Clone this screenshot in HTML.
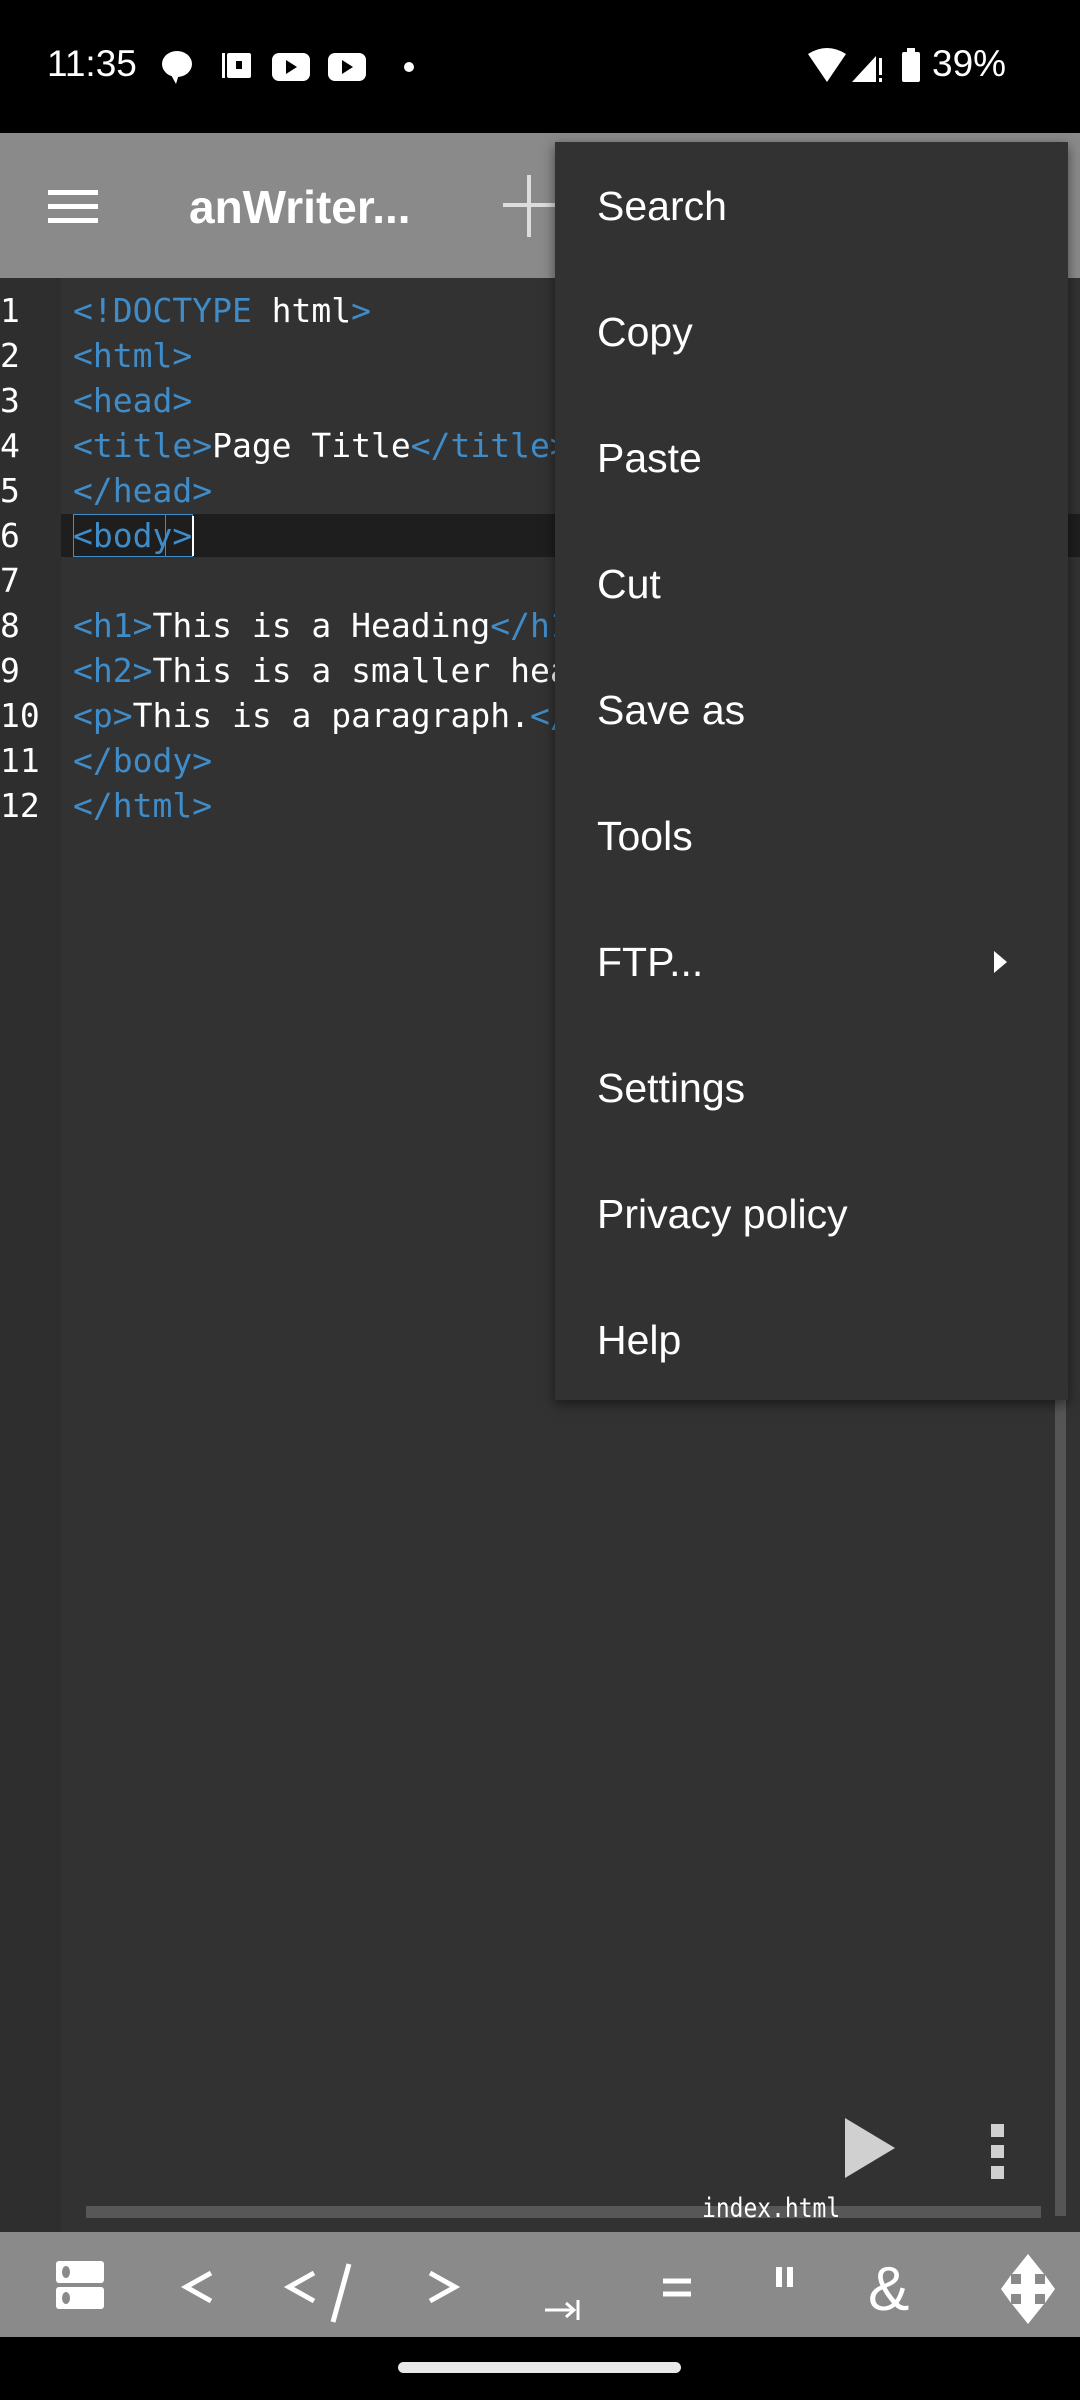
<!DOCTYPE html>
<html><head><style>
*{margin:0;padding:0;box-sizing:border-box}
body{width:1080px;height:2400px;background:#323232;position:relative;overflow:hidden;font-family:"Liberation Sans",sans-serif;color:#fff}
.abs{position:absolute}
.code{font-family:"DejaVu Sans Mono",monospace;font-size:33px;line-height:45px;white-space:pre}
.t{color:#3f8cc8}
.menu div{position:absolute;left:42px;font-size:41px;color:#fff;line-height:48px}
</style></head><body>
<div class="abs" style="left:0;top:0;width:1080px;height:133px;background:#000"></div>
<div class="abs" style="left:47px;top:43px;font-size:37px;">11:35</div>
<svg class="abs" style="left:160px;top:48px" width="270" height="40" viewBox="0 0 270 40">
<ellipse cx="17" cy="16" rx="15" ry="13" fill="#fff"/><path d="M10 25 L16 36 L19 26Z" fill="#fff"/>
<rect x="62" y="5" width="3" height="25" fill="#fff"/><rect x="67" y="5" width="24" height="25" rx="2" fill="#fff"/><rect x="76" y="13" width="6" height="8" fill="#000"/>
<rect x="112" y="5" width="38" height="28" rx="7" fill="#fff"/><path d="M126 12 L137 19 L126 26Z" fill="#000"/>
<rect x="168" y="5" width="38" height="28" rx="7" fill="#fff"/><path d="M182 12 L193 19 L182 26Z" fill="#000"/>
<circle cx="249" cy="19" r="5" fill="#fff"/>
</svg>
<svg class="abs" style="left:806px;top:46px" width="200" height="40" viewBox="0 0 200 40">
<path d="M2 8 Q21 -4 40 8 L21 36Z" fill="#fff"/>
<path d="M46 36 L70 10 L70 36Z" fill="#fff"/><rect x="73" y="12" width="3" height="17" fill="#fff"/><rect x="73" y="32" width="3" height="4" fill="#fff"/>
<rect x="96" y="6" width="18" height="30" rx="2" fill="#fff"/><rect x="101" y="2" width="8" height="5" fill="#fff"/>
</svg>
<div class="abs" style="left:932px;top:43px;font-size:37px;">39%</div>

<div class="abs" style="left:0;top:133px;width:1080px;height:145px;background:#8a8a8a"></div>
<div class="abs" style="left:48px;top:190px;width:50px;height:5px;background:#fff"></div>
<div class="abs" style="left:48px;top:204px;width:50px;height:5px;background:#fff"></div>
<div class="abs" style="left:48px;top:218px;width:50px;height:5px;background:#fff"></div>
<div class="abs" style="left:189px;top:180px;font-size:46px;font-weight:bold;">anWriter...</div>
<div class="abs" style="left:503px;top:203px;width:52px;height:4px;background:#ddd"></div>
<div class="abs" style="left:527px;top:175px;width:4px;height:62px;background:#ddd"></div>

<div class="abs" style="left:0;top:278px;width:61px;height:1954px;background:#2e2e2e"></div>
<div class="abs" style="left:61px;top:514px;width:1019px;height:43px;background:#1e1e1e"></div>
<div class="abs" style="left:73px;top:514px;width:120px;height:43px;border:1px solid #3f8cc8"></div>
<div class="abs" style="left:165px;top:514px;width:1px;height:43px;background:#3f8cc8"></div>
<div class="abs" style="left:192px;top:516px;width:2px;height:40px;background:#fff"></div>
<div class="abs code" style="left:0;top:288px;">1
2
3
4
5
6
7
8
9
10
11
12</div>
<div class="abs code" style="left:73px;top:288px;"><span class="t">&lt;!DOCTYPE</span> html<span class="t">&gt;</span>
<span class="t">&lt;html&gt;</span>
<span class="t">&lt;head&gt;</span>
<span class="t">&lt;title&gt;</span>Page Title<span class="t">&lt;/title&gt;</span>
<span class="t">&lt;/head&gt;</span>
<span class="t">&lt;body&gt;</span>

<span class="t">&lt;h1&gt;</span>This is a Heading<span class="t">&lt;/h1&gt;</span>
<span class="t">&lt;h2&gt;</span>This is a smaller heading
<span class="t">&lt;p&gt;</span>This is a paragraph.<span class="t">&lt;/p&gt;</span>
<span class="t">&lt;/body&gt;</span>
<span class="t">&lt;/html&gt;</span></div>

<div class="abs" style="left:1055px;top:278px;width:11px;height:1938px;background:#555"></div>
<div class="abs" style="left:86px;top:2206px;width:955px;height:12px;background:#575757"></div>
<svg class="abs" style="left:840px;top:2115px" width="180" height="65" viewBox="0 0 180 65">
<path d="M5 3 L55 33 L5 63Z" fill="#d0d0d0"/>
<rect x="151" y="9" width="13" height="13" fill="#d0d0d0"/><rect x="151" y="30" width="13" height="13" fill="#d0d0d0"/><rect x="151" y="51" width="13" height="13" fill="#d0d0d0"/>
</svg>
<div class="abs" style="left:702px;top:2193px;font-family:'DejaVu Sans Mono',monospace;font-size:27px;transform:scaleX(0.85);transform-origin:left;">index.html</div>

<div class="abs" style="left:0;top:2232px;width:1080px;height:105px;background:#8a8a8a"></div>
<svg class="abs" style="left:0;top:2232px" width="1080" height="105" viewBox="0 0 1080 105">
<rect x="56" y="29" width="48" height="22" rx="3" fill="#fff"/><rect x="56" y="55" width="48" height="22" rx="3" fill="#fff"/>
<ellipse cx="66" cy="40" rx="4" ry="6" fill="#8a8a8a"/><ellipse cx="66" cy="66" rx="4" ry="6" fill="#8a8a8a"/>
<g stroke="#fff" stroke-width="5" fill="none">
<path d="M211 41 L186 55 L211 69"/>
<path d="M314 41 L289 55 L314 69"/><path d="M349 32 L333 90"/>
<path d="M430 41 L455 55 L430 69"/>
<path d="M545 78 L574 78 M566 71 L574 78 L566 85 M578 68 L578 88" stroke-width="3"/>
<path d="M663 49 L691 49 M663 62 L691 62"/>
<path d="M779 35 L779 55 M790 35 L790 55" stroke-width="6"/>
</g>
<text x="868" y="78" font-size="62" fill="#fff" font-family="Liberation Sans">&amp;</text>
<path d="M1028 22 L1044 42 L1035 42 L1035 52 L1045 52 L1045 43 L1055 57 L1045 71 L1045 62 L1035 62 L1035 72 L1044 72 L1028 92 L1012 72 L1021 72 L1021 62 L1011 62 L1011 71 L1001 57 L1011 43 L1011 52 L1021 52 L1021 42 L1012 42Z" fill="#fff"/>
</svg>
<div class="abs" style="left:0;top:2337px;width:1080px;height:63px;background:#000"></div>
<div class="abs" style="left:398px;top:2362px;width:283px;height:11px;border-radius:6px;background:#e8e8e8"></div>

<div class="abs menu" style="left:555px;top:142px;width:513px;height:1258px;background:#323232;box-shadow:0 4px 12px rgba(0,0,0,.5)">
<div style="top:40px">Search</div>
<div style="top:166px">Copy</div>
<div style="top:292px">Paste</div>
<div style="top:418px">Cut</div>
<div style="top:544px">Save as</div>
<div style="top:670px">Tools</div>
<div style="top:796px">FTP...</div>
<div style="top:922px">Settings</div>
<div style="top:1048px">Privacy policy</div>
<div style="top:1174px">Help</div>
<svg class="abs" style="left:436px;top:806px" width="20" height="30" viewBox="0 0 20 30"><path d="M3 3 L16 14 L3 25Z" fill="#fff"/></svg>
</div>
</body></html>
